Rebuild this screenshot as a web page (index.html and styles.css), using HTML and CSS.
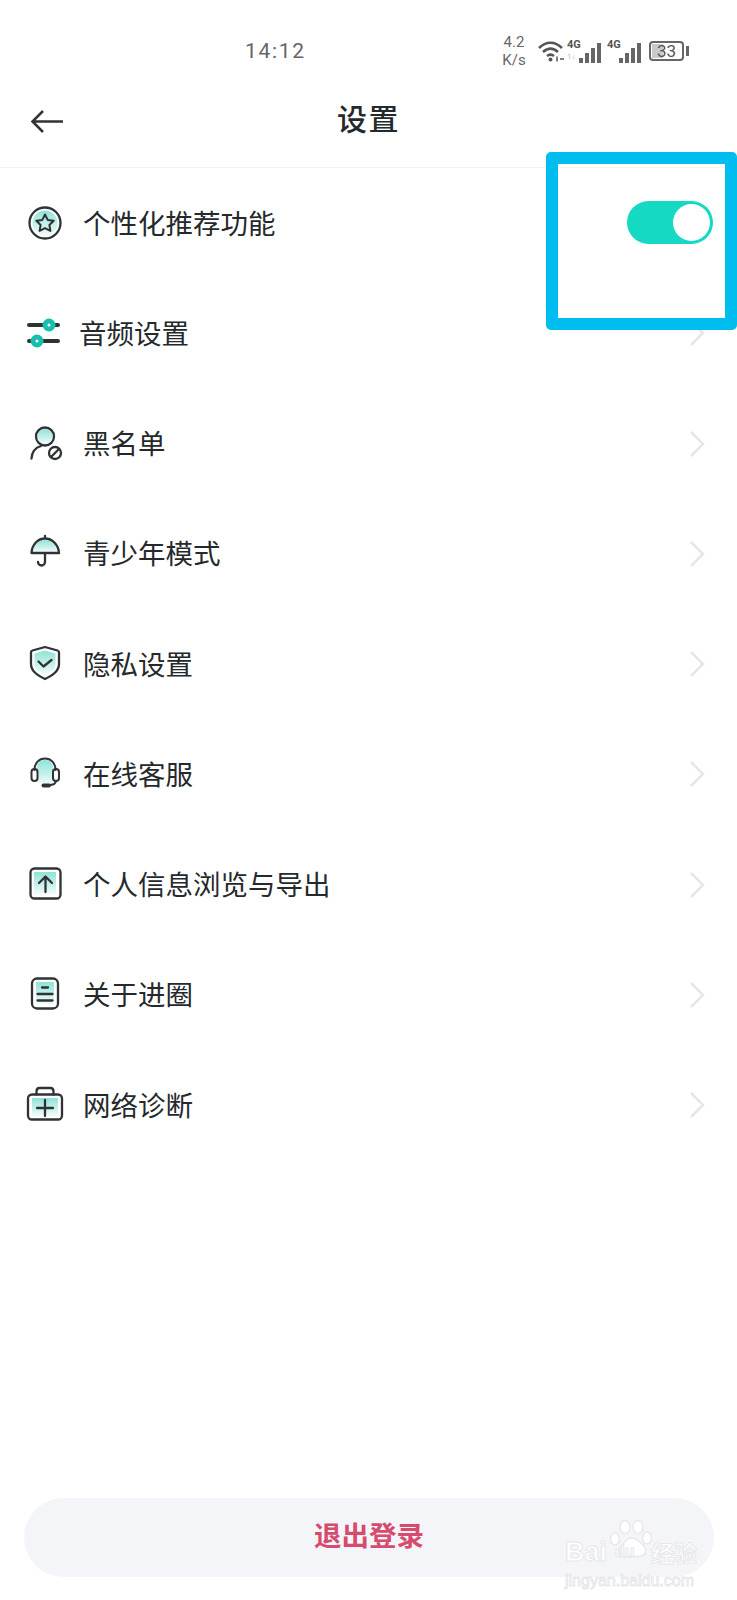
FILE: index.html
```html
<!DOCTYPE html>
<html lang="zh-CN">

<head>
    <meta charset="UTF-8">
    <meta name="viewport" content="width=device-width, initial-scale=1.0">
    <title>设置</title>
    <link rel="stylesheet" href="styles.css">
</head>

<body>
    <svg class="defs" width="0" height="0">
        <defs>
            <linearGradient id="tint" x1="0" y1="0" x2="0" y2="1">
                <stop offset="0" stop-color="#8fe3d8" />
                <stop offset="1" stop-color="#f2fcfa" />
            </linearGradient>
        </defs>
    </svg>

    <main class="page">
        <div class="status-bar">
            <span class="clock">14:12</span>
            <span class="speed">4.2<br>K/s</span>
            <svg class="wifi" width="28" height="24" viewBox="0 0 28 24">
                <path d="M2 9C9 2 18 2 25 9M6 13c5-4.500 10-4.500 15 0M10 17c2.500-2 4.500-2 7 0" />
                <circle cx="13.500" cy="20.500" r="2" />
                <path class="thin" d="M20 17.500v5M23 20h4" />
            </svg>
            <span class="sim">
                <span class="sim-label">4G</span>
                <span class="sim-sub">1↓</span>
                <span class="bars"><i class="b1"></i><i class="b2"></i><i class="b3"></i><i class="b4"></i></span>
            </span>
            <span class="sim sim-two">
                <span class="sim-label">4G</span>
                <span class="bars"><i class="b1"></i><i class="b2"></i><i class="b3"></i><i class="b4"></i></span>
            </span>
            <span class="battery"><span class="battery-level"></span><span class="battery-num">33</span></span>
            <span class="battery-tip"></span>
        </div>

        <header class="top-bar">
            <svg class="back" width="34" height="26" viewBox="0 0 34 26">
                <path d="M33 12.500H3M13 2L2.500 12.500 13 23" />
            </svg>
            <h1 class="title">设置</h1>
        </header>

        <ul class="menu">
            <li class="row">
                <svg class="icon" width="40" height="40" viewBox="0 0 40 40">
                    <circle class="fill" cx="21" cy="20" r="12.500" />
                    <circle cx="21" cy="20" r="15.500" />
                    <path class="thin" d="M21 11.500l2.700 5.400 6 .9-4.300 4.200 1 5.900-5.400-2.800-5.400 2.800 1-5.900-4.300-4.200 6-.9z" />
                </svg>
                <span class="label">个性化推荐功能</span>
                <span class="switch"><span class="knob"></span></span>
            </li>
            <li class="row row-tight">
                <svg class="icon" width="40" height="40" viewBox="0 0 40 40">
                    <path class="bar" d="M5 12h29M5 28h29" />
                    <circle class="dot" cx="25" cy="12" r="4" />
                    <circle class="dot" cx="13" cy="28" r="4" />
                </svg>
                <span class="label">音频设置</span>
                <svg class="chevron" width="18" height="28" viewBox="0 0 18 28"><path d="M3 2l12 12L3 26" /></svg>
            </li>
            <li class="row">
                <svg class="icon" width="40" height="40" viewBox="0 0 40 40">
                    <circle class="fill" cx="21" cy="12.500" r="7.500" />
                    <circle cx="21" cy="12.500" r="9" />
                    <path d="M7.500 34.500C8 28 11.500 23.500 17 22" />
                    <circle cx="31" cy="29" r="6" />
                    <path d="M27 33l8-8" />
                </svg>
                <span class="label">黑名单</span>
                <svg class="chevron" width="18" height="28" viewBox="0 0 18 28"><path d="M3 2l12 12L3 26" /></svg>
            </li>
            <li class="row">
                <svg class="icon" width="40" height="40" viewBox="0 0 40 40">
                    <path class="fill" d="M9 18C10 10 15 6 21 6s11 4 12 12z" />
                    <path d="M7.500 19C8 10.500 14 4.500 21 4.500S34.500 10.500 35 19zM21 2v2.500M21 19v9a3.500 3.500 0 0 1-7 0" />
                </svg>
                <span class="label">青少年模式</span>
                <svg class="chevron" width="18" height="28" viewBox="0 0 18 28"><path d="M3 2l12 12L3 26" /></svg>
            </li>
            <li class="row">
                <svg class="icon" width="40" height="40" viewBox="0 0 40 40">
                    <path class="fill" d="M21 6.500l10.500 3V20c0 5-4.500 8-10.500 11-6-3-10.500-6-10.500-11V9.500z" />
                    <path d="M21 3l12.500 3.500c1 .3 1.500 1 1.500 2V20c0 7.500-7 11.500-14 15-7-3.500-14-7.500-14-15V8.500c0-1 .5-1.700 1.500-2z" />
                    <path d="M14.500 17.500l5 5 8-6.500" />
                </svg>
                <span class="label">隐私设置</span>
                <svg class="chevron" width="18" height="28" viewBox="0 0 18 28"><path d="M3 2l12 12L3 26" /></svg>
            </li>
            <li class="row">
                <svg class="icon" width="40" height="40" viewBox="0 0 40 40">
                    <path class="fill" d="M13 12C14 8 17 6 21 6s7 2 8 6v15c-2 3-5 4-8 4s-6-1-8-4z" />
                    <path class="thin" d="M10.500 16C10.500 9 15 4.500 21 4.500S31.500 9 31.500 16" />
                    <rect class="thin" x="7.500" y="15" width="6" height="12" rx="3" />
                    <rect class="thin" x="29" y="15" width="6" height="12" rx="3" />
                    <path class="thin" d="M32 27c-.5 3-3.500 4-7 4" />
                    <path class="bar" d="M19.500 31.500H25" />
                </svg>
                <span class="label">在线客服</span>
                <svg class="chevron" width="18" height="28" viewBox="0 0 18 28"><path d="M3 2l12 12L3 26" /></svg>
            </li>
            <li class="row">
                <svg class="icon" width="40" height="40" viewBox="0 0 40 40">
                    <rect class="fill" x="10" y="7" width="22" height="22" />
                    <rect x="6.500" y="3.500" width="30" height="30" rx="4" />
                    <path d="M21.500 27V12M15 18l6.500-6.500L28 18" />
                </svg>
                <span class="label">个人信息浏览与导出</span>
                <svg class="chevron" width="18" height="28" viewBox="0 0 18 28"><path d="M3 2l12 12L3 26" /></svg>
            </li>
            <li class="row">
                <svg class="icon" width="40" height="40" viewBox="0 0 40 40">
                    <rect class="fill" x="12" y="7" width="18" height="22" />
                    <rect x="8" y="3.500" width="26" height="30" rx="5" />
                    <path d="M18 12.500h6M13.500 19h15M13.500 25.500h15" />
                </svg>
                <span class="label">关于进圈</span>
                <svg class="chevron" width="18" height="28" viewBox="0 0 18 28"><path d="M3 2l12 12L3 26" /></svg>
            </li>
            <li class="row">
                <svg class="icon" width="40" height="40" viewBox="0 0 40 40">
                    <rect class="fill" x="8" y="13" width="26" height="18" />
                    <rect x="4" y="9.500" width="34" height="25" rx="4" />
                    <path d="M12.500 9.500V6.500c0-2 1-3.500 3-3.500h11c2 0 3 1.500 3 3.500v3M13 23h16M21 15v16" />
                </svg>
                <span class="label">网络诊断</span>
                <svg class="chevron" width="18" height="28" viewBox="0 0 18 28"><path d="M3 2l12 12L3 26" /></svg>
            </li>
        </ul>

        <div class="footer">
            <button class="logout">退出登录</button>
        </div>

        <!-- annotation drawn over the screenshot -->
        <div class="callout"></div>

        <div class="watermark">
            <svg class="paw" width="44" height="40" viewBox="0 0 44 40">
                <ellipse cx="6" cy="19" rx="4.500" ry="6" />
                <ellipse cx="16" cy="7" rx="5" ry="6.500" />
                <ellipse cx="29" cy="7" rx="5" ry="6.500" />
                <ellipse cx="38" cy="18" rx="4.500" ry="6" />
                <path d="M22 18c-6 0-7 6-10 9-3 4-1 10 5 10 3 0 6-1 8-1s4 1 7 0c5-1 6-6 3-10-4-3-6-8-13-8z" />
            </svg>
            <div class="wm-brand">
                <span class="wm-bai">Bai</span>
                <span class="wm-du">du</span>
                <span class="wm-cn">经验</span>
            </div>
            <div class="wm-url">jingyan.baidu.com</div>
        </div>
    </main>
</body>

</html>
```

FILE: styles.css
```css
* {
    padding: 0;
    margin: 0;
    box-sizing: border-box;
    font-family: "Noto Sans CJK SC", "Noto Sans", sans-serif;
}

:root {
    --color-text: #26292c;
    --color-line: #2f3335;
    --color-teal: #16d9c3;
    --color-blue: #00bdf0;
}

body {
    background: #fff;
    color: var(--color-text);
}

.defs {
    display: block;
}

.page {
    position: relative;
    width: 737px;
    height: 1600px;
    display: flex;
    flex-direction: column;
    overflow: hidden;
    background: #fff;
}

/* status bar */
.status-bar {
    height: 85px;
    display: flex;
    align-items: center;
    padding: 16px 0 0 245px;
    color: #666;
}

.clock {
    font-family: "Roboto", sans-serif;
    font-size: 21px;
    letter-spacing: 1.700px;
    width: 252px;
}

.speed {
    font-family: "Roboto", sans-serif;
    font-size: 15px;
    line-height: 18px;
    width: 40px;
    padding-right: 6px;
    text-align: center;
}

.wifi {
    fill: none;
    stroke: #555;
    stroke-width: 2.500;
}

.wifi circle {
    fill: #555;
    stroke: none;
}

.wifi .thin {
    stroke-width: 1.500;
}

.sim {
    position: relative;
    width: 34px;
    height: 24px;
    margin-left: 2px;
}

.sim-two {
    margin-left: 6px;
}

.sim-label {
    position: absolute;
    left: 0;
    top: 0;
    font-family: "Roboto", sans-serif;
    font-size: 11px;
    font-weight: 700;
    line-height: 12px;
    color: #555;
}

.sim-sub {
    position: absolute;
    left: 0;
    top: 13px;
    font-family: "Roboto", sans-serif;
    font-size: 8px;
    line-height: 10px;
    color: #bbb;
}

.bars {
    position: absolute;
    right: 0;
    bottom: 0;
    display: flex;
    align-items: flex-end;
    gap: 2px;
}

.bars i {
    display: block;
    width: 4px;
    background: #666;
}

.bars .b1 { height: 5px; }
.bars .b2 { height: 10px; }
.bars .b3 { height: 15px; }
.bars .b4 { height: 20px; }

.battery {
    position: relative;
    width: 35px;
    height: 20px;
    margin-left: 8px;
    border: 2px solid #666;
    border-radius: 4px;
}

.battery-level {
    position: absolute;
    left: 1px;
    top: 1px;
    bottom: 1px;
    width: 11px;
    background: #c9c9c9;
}

.battery-num {
    position: absolute;
    inset: 0;
    text-align: center;
    font-family: "Roboto", sans-serif;
    font-size: 17px;
    line-height: 16px;
    color: #555;
}

.battery-tip {
    width: 3px;
    height: 10px;
    margin-left: 2px;
    background: #666;
}

/* top bar */
.top-bar {
    position: relative;
    height: 83px;
    display: flex;
    align-items: center;
    justify-content: center;
    border-bottom: 1px solid #f3f3f3;
    padding-bottom: 18px;
}

.back {
    position: absolute;
    left: 30px;
    top: 24px;
    fill: none;
    stroke: #333;
    stroke-width: 2.500;
}

.title {
    font-size: 30px;
    font-weight: 500;
    line-height: 40px;
    letter-spacing: 1.500px;
}

/* menu */
.menu {
    list-style: none;
    display: grid;
    grid-auto-rows: 110.25px;
}

.row {
    display: flex;
    align-items: center;
    padding: 0 31px 0 24px;
}

.row-tight .label {
    margin-left: 15px;
}

.icon {
    flex: none;
    fill: none;
    stroke: var(--color-line);
    stroke-width: 2.300;
    stroke-linecap: round;
    stroke-linejoin: round;
}

.icon .fill {
    fill: url(#tint);
    stroke: none;
}

.icon .thin {
    stroke-width: 2;
}

.icon .bar {
    stroke-width: 4;
}

.icon .dot {
    fill: #fff;
    stroke: #16bfae;
    stroke-width: 5;
}

.label {
    flex: 1;
    margin-left: 19px;
    margin-bottom: 3px;
    font-size: 27.500px;
    line-height: 40px;
}

.chevron {
    flex: none;
    fill: none;
    stroke: #e6e6e6;
    stroke-width: 2.500;
}

.switch {
    width: 86px;
    height: 43px;
    margin-right: -7px;
    margin-bottom: 2px;
    padding: 3px;
    display: flex;
    justify-content: flex-end;
    border-radius: 22px;
    background: var(--color-teal);
}

.knob {
    display: block;
    width: 37px;
    height: 37px;
    border-radius: 50%;
    background: #fff;
}

/* footer */
.footer {
    margin-top: auto;
    padding: 0 23px 23px 24px;
}

.logout {
    display: block;
    width: 100%;
    height: 79px;
    padding-bottom: 8px;
    border: none;
    border-radius: 40px;
    background: #f4f5f9;
    color: #d64c6e;
    font-size: 27.500px;
    font-weight: 700;
}

/* overlays */
.callout {
    position: absolute;
    left: 546px;
    top: 152px;
    width: 191px;
    height: 178px;
    border: 12px solid var(--color-blue);
    border-radius: 5px;
}

.watermark {
    position: absolute;
    left: 565px;
    top: 1520px;
    width: 134px;
    color: #fff;
    -webkit-text-stroke: 1px #e7e7ec;
}

.paw {
    position: absolute;
    left: 44px;
    top: 0;
    fill: #fff;
    stroke: #e7e7ec;
    stroke-width: 1.500;
}

.wm-brand {
    position: relative;
    height: 28px;
    margin-top: 18px;
    display: flex;
    align-items: center;
    white-space: nowrap;
}

.wm-bai {
    width: 50px;
    font-family: "Liberation Sans", sans-serif;
    font-size: 27px;
    font-weight: 700;
}

.wm-du {
    width: 36px;
    font-family: "Liberation Sans", sans-serif;
    font-size: 16px;
    font-weight: 700;
}

.wm-cn {
    font-size: 23px;
    font-weight: 700;
}

.wm-url {
    margin-top: 6px;
    font-family: "Liberation Sans", sans-serif;
    font-size: 16px;
    line-height: 18px;
    white-space: nowrap;
}
```
